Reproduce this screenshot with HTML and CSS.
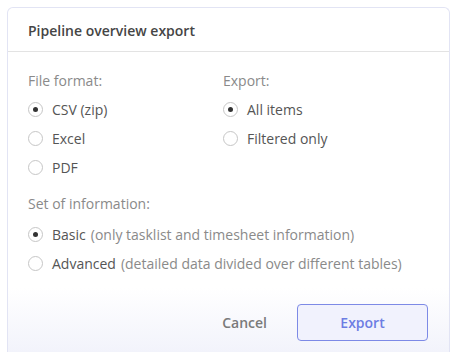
FILE: index.html
```html
<!DOCTYPE html>
<html>
<head>
<meta charset="utf-8">
<link rel="stylesheet" href="styles.css">
</head>
<body>
<div class="card">
  <div class="card-header">Pipeline overview export</div>
  <div class="card-body">
    <div class="columns">
      <div class="group group-format">
        <div class="group-label">File format:</div>
        <div class="radio checked"><span class="dot"></span><span class="radio-text">CSV (zip)</span></div>
        <div class="radio"><span class="dot"></span><span class="radio-text">Excel</span></div>
        <div class="radio"><span class="dot"></span><span class="radio-text">PDF</span></div>
      </div>
      <div class="group">
        <div class="group-label">Export:</div>
        <div class="radio checked"><span class="dot"></span><span class="radio-text">All items</span></div>
        <div class="radio"><span class="dot"></span><span class="radio-text">Filtered only</span></div>
      </div>
    </div>
    <div class="group group-info">
      <div class="group-label">Set of information:</div>
      <div class="radio checked"><span class="dot"></span><span class="radio-text">Basic</span><span class="hint">(only tasklist and timesheet information)</span></div>
      <div class="radio"><span class="dot"></span><span class="radio-text">Advanced</span><span class="hint">(detailed data divided over different tables)</span></div>
    </div>
  </div>
  <div class="card-footer">
    <button class="btn btn-cancel">Cancel</button>
    <button class="btn btn-export">Export</button>
  </div>
</div>
</body>
</html>
```
FILE: styles.css
```css
html, body {
  margin: 0;
  padding: 0;
  background: #ffffff;
  overflow: hidden;
}
body {
  font-family: "Open Sans", "Liberation Sans", sans-serif;
  font-size: 14px;
  color: #555;
  padding: 7px 0 0 7px;
  height: 352px;
  box-sizing: border-box;
}
.card {
  width: 443px;
  height: 360px;
  box-sizing: border-box;
  border: 1px solid #e2e4f4;
  border-bottom: none;
  border-radius: 6px 6px 0 0;
  background: linear-gradient(to bottom, #ffffff 0%, #ffffff 78%, #f2f3fb 96%);
}
.card-header {
  height: 44px;
  box-sizing: border-box;
  border-bottom: 1px solid #e3e3e3;
  padding: 1px 20px 0 20px;
  display: flex;
  align-items: center;
  font-weight: 600;
  color: #454545;
}
.card-body {
  padding: 14px 20px 0 20px;
}
.columns {
  display: flex;
}
.group-format {
  width: 195px;
}
.group-label {
  height: 29px;
  display: flex;
  align-items: center;
  color: #8a8a8a;
}
.radio {
  height: 29px;
  display: flex;
  align-items: center;
  color: #555;
}
.dot {
  width: 15px;
  height: 15px;
  box-sizing: border-box;
  border: 1px solid #c6c6c6;
  border-radius: 50%;
  margin-right: 9px;
  display: flex;
  align-items: center;
  justify-content: center;
  flex: none;
}
.radio.checked .dot::after {
  content: "";
  width: 5px;
  height: 5px;
  border-radius: 50%;
  background: #333;
}
.hint {
  color: #8a8a8a;
  margin-left: 5px;
}
.group-info {
  margin-top: 7px;
}
.group-info .group-label {
  margin-bottom: 2px;
}
.card-footer {
  display: flex;
  justify-content: flex-end;
  align-items: center;
  padding: 26px 21px 0 0;
}
.btn {
  font-family: "Open Sans", "Liberation Sans", sans-serif;
  font-size: 14px;
  font-weight: 600;
  height: 37px;
  box-sizing: border-box;
  border-radius: 4px;
  cursor: pointer;
}
.btn-cancel {
  background: transparent;
  border: none;
  color: #7a7a7a;
  padding: 0;
  margin-right: 30px;
}
.btn-export {
  width: 131px;
  background: #f1f2fd;
  border: 1px solid #7d8ae6;
  color: #6d7de3;
}
```
